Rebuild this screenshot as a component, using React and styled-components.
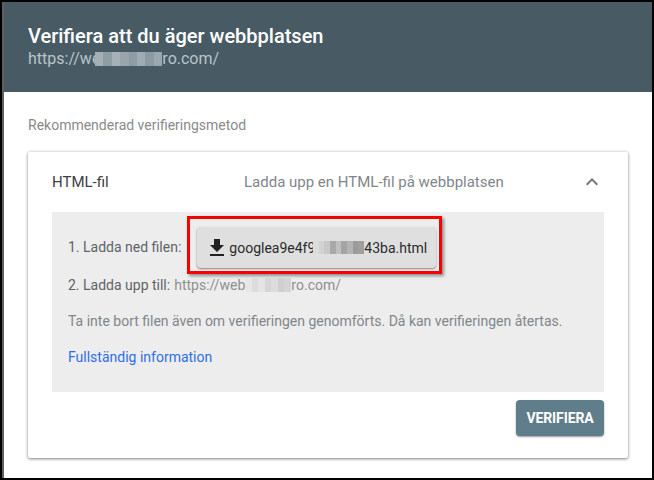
import React from "react";
import styled, { createGlobalStyle } from "styled-components";

const Global = createGlobalStyle`
  html, body { margin: 0; padding: 0; background: #fff; }
  body { font-family: Roboto, "Liberation Sans", sans-serif; }
`;

const blocks = (colors) => {
  const step = 100 / colors.length;
  const stops = colors.map(
    (c, i) => `${c} ${(i * step).toFixed(2)}% ${((i + 1) * step).toFixed(2)}%`
  );
  return `linear-gradient(90deg, ${stops.join(", ")})`;
};

const Frame = styled.div`
  width: 654px;
  height: 480px;
  box-sizing: border-box;
  border: 2px solid #000;
  background: #fff;
  overflow: hidden;
  display: flex;
  flex-direction: column;
  position: relative;
`;
const LeftEdge = styled.div`
  position: absolute;
  left: 0;
  top: 0;
  bottom: 0;
  width: 2px;
  background: #5f5f5f;
`;
const Header = styled.header`
  height: 90px;
  flex: none;
  background: #485b65;
  padding: 22px 0 0 26px;
  box-sizing: border-box;
`;
const Title = styled.h1`
  margin: 0;
  font-size: 20px;
  line-height: 24px;
  font-weight: 500;
  color: #fff;
`;
const Url = styled.div`
  font-size: 16px;
  line-height: 20px;
  margin-top: 1px;
  color: #b9c4ca;
  display: flex;
  align-items: center;
`;
const Blur = styled.span`
  display: inline-block;
  width: ${(p) => p.$w}px;
  height: ${(p) => p.$h}px;
  margin-left: ${(p) => p.$ml || 0}px;
  background: ${(p) => p.$bg};
  flex: none;
`;
const Body = styled.main`
  flex: 1;
  padding: 25px 24px 0 26px;
  display: flex;
  flex-direction: column;
`;
const Recommended = styled.div`
  font-size: 14px;
  line-height: 16px;
  color: #8a8a8a;
  margin-bottom: 19px;
`;
const Card = styled.section`
  width: 600px;
  height: 306px;
  background: #fff;
  border-radius: 2px;
  box-shadow: 0 1px 3px rgba(0, 0, 0, 0.45), 0 0 4px rgba(0, 0, 0, 0.12);
  padding: 0 24px;
  box-sizing: border-box;
  display: flex;
  flex-direction: column;
`;
const CardHead = styled.div`
  height: 60px;
  flex: none;
  display: flex;
  align-items: center;
`;
const Method = styled.div`
  width: 192px;
  font-size: 15px;
  color: #3c4043;
`;
const Desc = styled.div`
  flex: 1;
  font-size: 15px;
  color: #80868b;
`;
const Chevron = styled.svg`
  width: 24px;
  height: 24px;
  fill: #757575;
`;
const Panel = styled.div`
  height: 180px;
  flex: none;
  background: #ededed;
  padding: 0 16px;
  box-sizing: border-box;
  display: flex;
  flex-direction: column;
`;
const FileRow = styled.div`
  height: 63px;
  flex: none;
  display: flex;
  align-items: flex-start;
`;
const FileLabel = styled.div`
  margin-top: 25px;
  font-size: 14px;
  line-height: 20px;
  color: #5f6368;
`;
const Highlight = styled.div`
  margin: 4px 0 0 6px;
  width: 255px;
  height: 58px;
  box-sizing: border-box;
  border: 3px solid #f60000;
  box-shadow: 2px 2px 3px rgba(0, 0, 0, 0.4);
  padding: 8px 0 0 7px;
`;
const DownloadButton = styled.div`
  width: 239px;
  height: 41px;
  box-sizing: border-box;
  background: #dfdfdf;
  border-radius: 4px;
  box-shadow: 0 1px 2px rgba(0, 0, 0, 0.45);
  display: flex;
  align-items: center;
  padding-left: 8px;
  font-size: 14px;
  color: #2b2b2b;
`;
const DownloadIcon = styled.svg`
  width: 24px;
  height: 24px;
  fill: #212121;
  flex: none;
`;
const UploadRow = styled.div`
  font-size: 14px;
  line-height: 20px;
  color: #5f6368;
  display: flex;
  align-items: center;
`;
const Muted = styled.span`
  color: #8f8f8f;
  margin-left: ${(p) => p.$ml ?? 4}px;
`;
const Note = styled.div`
  font-size: 14px;
  line-height: 20px;
  color: #80868b;
  margin-top: 16px;
`;
const Info = styled.a`
  font-size: 14px;
  line-height: 20px;
  color: #2f6fe4;
  margin-top: 16px;
`;
const Footer = styled.div`
  flex: 1;
  display: flex;
  justify-content: flex-end;
  align-items: flex-start;
  padding-top: 8px;
`;
const Verify = styled.div`
  width: 88px;
  height: 36px;
  background: #607d8b;
  border-radius: 4px;
  box-shadow: 0 1px 2px rgba(0, 0, 0, 0.4);
  color: #fff;
  font-size: 14px;
  font-weight: 700;
  letter-spacing: -0.1px;
  display: flex;
  align-items: center;
  justify-content: center;
`;

export default function App() {
  return (
    <Frame>
      <Global />
      <LeftEdge />
      <Header>
        <Title>Verifiera att du äger webbplatsen</Title>
        <Url>
          https://we
          <Blur
            $ml={-5}
            $w={67}
            $h={14}
            $bg={blocks(["#a3afb5", "#8f9da5", "#a6b1b7", "#98a5ac", "#8e9ca4", "#a0acb3", "#8c9aa2", "#9aa7ae"])}
          />
          ro.com/
        </Url>
      </Header>
      <Body>
        <Recommended>Rekommenderad verifieringsmetod</Recommended>
        <Card>
          <CardHead>
            <Method>HTML-fil</Method>
            <Desc>Ladda upp en HTML-fil på webbplatsen</Desc>
            <Chevron viewBox="0 0 24 24">
              <path d="M7.41 15.41 12 10.83l4.59 4.58L18 14l-6-6-6 6z" />
            </Chevron>
          </CardHead>
          <Panel>
            <FileRow>
              <FileLabel>1. Ladda ned filen:</FileLabel>
              <Highlight>
                <DownloadButton>
                  <DownloadIcon viewBox="0 0 24 24">
                    <path d="M19 9h-4V3H9v6H5l7 7 7-7zM5 18v2h14v-2H5z" />
                  </DownloadIcon>
                  googlea9e4f9
                  <Blur
                    $ml={-2}
                    $w={51}
                    $h={13}
                    $bg={blocks(["#dcdcdc", "#d2d2d2", "#c8c8c8", "#a9a9a9", "#c0c0c0", "#a4a4a4", "#b4b4b4", "#9b9b9b", "#9f9f9f"])}
                  />
                  43ba.html
                </DownloadButton>
              </Highlight>
            </FileRow>
            <UploadRow>
              2. Ladda upp till:
              <Muted>https://web</Muted>
              <Blur
                $w={46}
                $h={14}
                $bg={blocks(["#e6e6e6", "#dcdcdc", "#e4e4e4", "#d6d6d6", "#dcdcdc", "#cfcfcf", "#d4d4d4"])}
              />
              <Muted $ml={0}>ro.com/</Muted>
            </UploadRow>
            <Note>Ta inte bort filen även om verifieringen genomförts. Då kan verifieringen återtas.</Note>
            <Info>Fullständig information</Info>
          </Panel>
          <Footer>
            <Verify>VERIFIERA</Verify>
          </Footer>
        </Card>
      </Body>
    </Frame>
  );
}
